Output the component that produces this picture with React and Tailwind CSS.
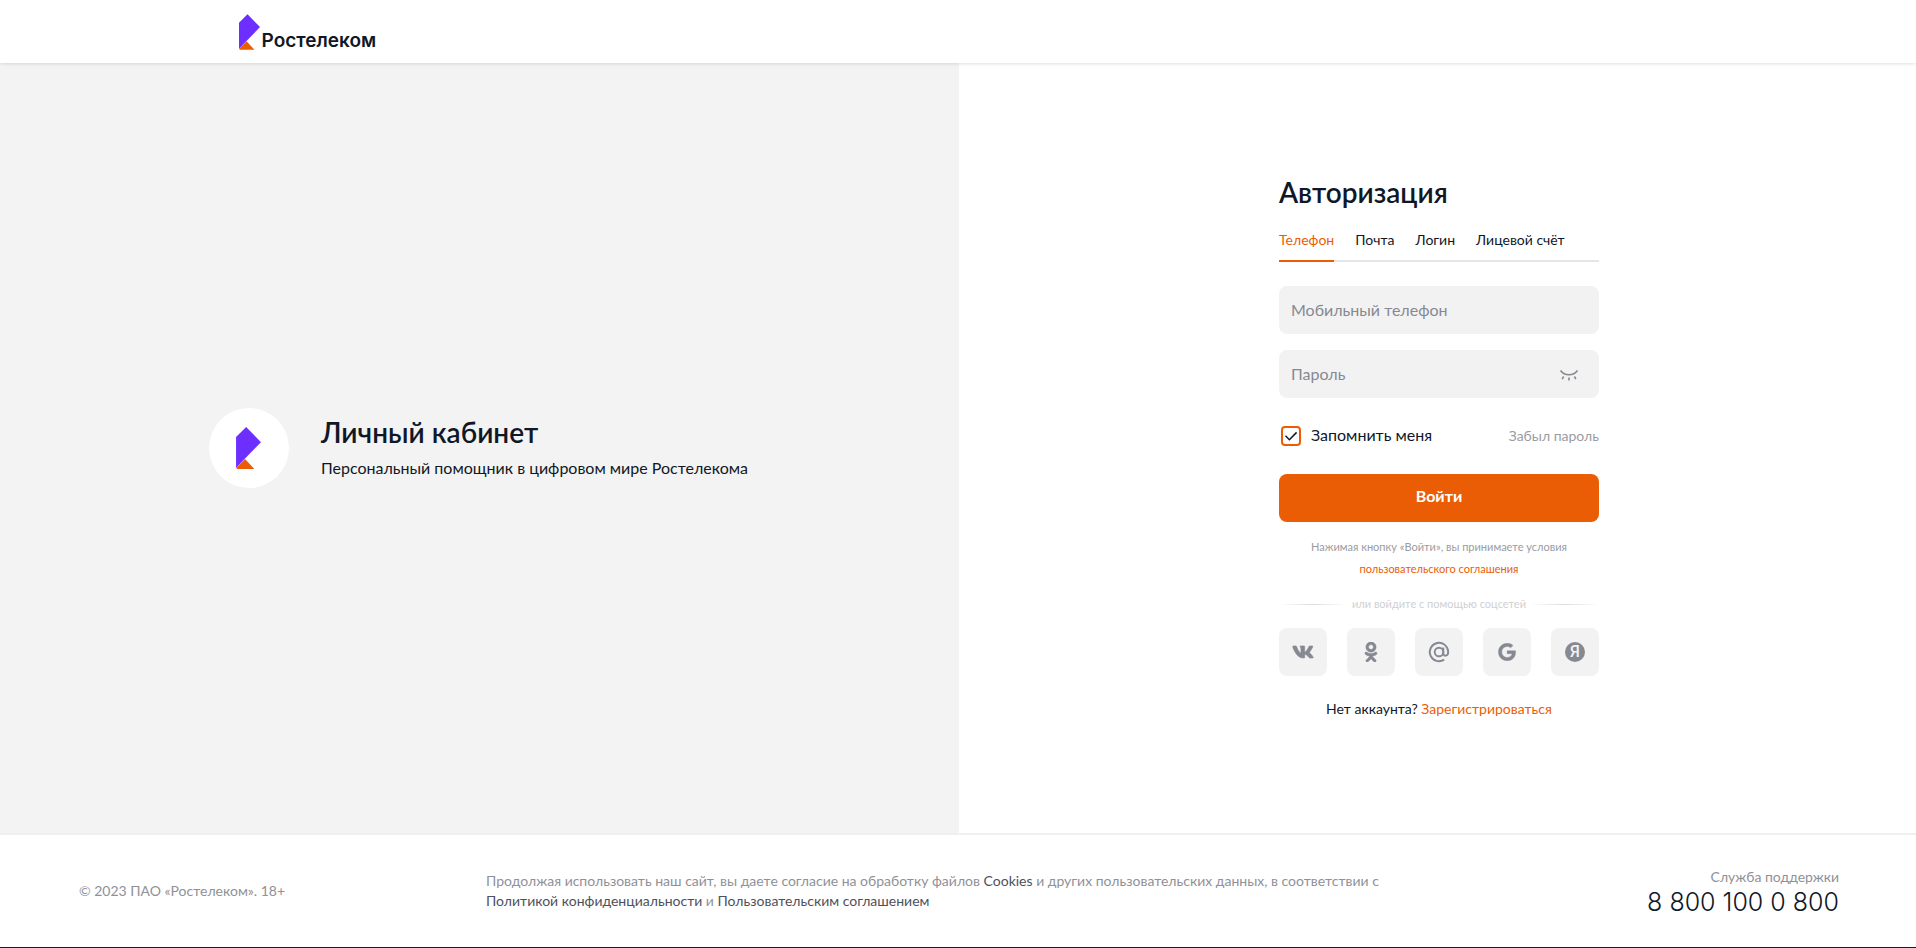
import React, { useState } from 'react';
import { FaVk, FaOdnoklassniki, FaGoogle } from 'react-icons/fa';

function Mark({ className }) {
  return (
    <svg viewBox="0 0 64 108" className={className} aria-hidden="true">
      <path d="M26 0 64 39 0 105V26Z" fill="#6c2fff" />
      <path d="M23 82 47 108H3L0 105Z" fill="#ea5d05" />
    </svg>
  );
}

function EyeClosed() {
  return (
    <svg viewBox="0 0 24 24" className="size-6" fill="none" stroke="#868992" strokeWidth="1.6" aria-hidden="true">
      <path d="M3.500 8.500c2 2.700 5 4.200 8.500 4.200s6.500-1.500 8.500-4.200" />
      <path d="M12 15.500v3M6.600 14.500l-1.400 2.600M17.400 14.500l1.400 2.600" />
    </svg>
  );
}

function AtSign() {
  return (
    <svg viewBox="0 0 24 24" className="size-6" fill="none" stroke="currentColor" strokeWidth="1.900" aria-hidden="true">
      <circle cx="12" cy="12" r="4.300" />
      <path d="M16.300 7.600V13.200c0 3.700 4.900 3.200 4.900-1.200A9.200 9.200 0 1 0 17.200 19.600" />
    </svg>
  );
}

const tabs = ['Телефон', 'Почта', 'Логин', 'Лицевой счёт'];

const socials = [
  { name: 'ВКонтакте', icon: <FaVk className="size-[22px]" stroke="currentColor" strokeWidth="14" /> },
  { name: 'Одноклассники', icon: <FaOdnoklassniki className="size-5" stroke="currentColor" strokeWidth="16" /> },
  { name: 'Mail.ru', icon: <AtSign /> },
  { name: 'Google', icon: <FaGoogle className="size-[18px]" stroke="currentColor" strokeWidth="12" /> },
  {
    name: 'Яндекс',
    icon: (
      <span className="flex size-5 items-center justify-center rounded-full bg-[#868992] font-['Roboto',sans-serif] text-base leading-5 font-medium text-[#f2f2f2]">
        Я
      </span>
    ),
  },
];

const fieldClass =
  'h-12 w-full rounded-lg bg-[#f2f2f2] px-3 pb-0.5 text-base text-[#101828] outline-none placeholder:text-[#868992]';

export default function App() {
  const [active, setActive] = useState(tabs[0]);
  const [remember, setRemember] = useState(true);
  const [visible, setVisible] = useState(false);

  return (
    <div className="flex min-h-screen flex-col bg-white font-['Lato','Noto_Sans',sans-serif] text-[#101828]">
      <header className="relative z-10 flex h-[63px] items-center bg-white pl-[12.45%] shadow-[0_0_4px_rgba(0,0,0,0.18)]">
        <a href="#" className="flex items-end gap-0.5">
          <Mark className="h-9 w-[21px]" />
          <span className="font-['Inter',sans-serif] text-[19px] leading-[18px] font-semibold">Ростелеком</span>
        </a>
      </header>

      <main className="grid flex-1 grid-cols-[959fr_957fr]">
        <section className="flex items-center justify-center gap-8 bg-[#f3f3f3] pr-0.5">
          <div className="flex size-20 shrink-0 items-center justify-center rounded-full bg-white">
            <Mark className="h-[42px] w-[25px]" />
          </div>
          <div>
            <h2 className="text-[28px] leading-10 font-semibold">Личный кабинет</h2>
            <p className="text-base leading-8">Персональный помощник в цифровом мире Ростелекома</p>
          </div>
        </section>

        <section className="flex items-center justify-center pl-[3px]">
          <form className="flex w-80 flex-col" onSubmit={(e) => e.preventDefault()}>
            <h1 className="text-[28px] leading-8 font-semibold">Авторизация</h1>

            <div role="tablist" className="mt-[22px] flex gap-[21px] border-b-2 border-[#e6e6e8]">
              {tabs.map((tab) => (
                <button
                  key={tab}
                  type="button"
                  role="tab"
                  aria-selected={active === tab}
                  onClick={() => setActive(tab)}
                  className={
                    active === tab
                      ? '-mb-0.5 border-b-2 border-[#ea5d05] pb-[10px] text-sm text-[#ea5d05]'
                      : '-mb-0.5 border-b-2 border-transparent pb-[10px] text-sm'
                  }
                >
                  {tab}
                </button>
              ))}
            </div>

            <input type="tel" aria-label="Мобильный телефон" placeholder="Мобильный телефон" className={`mt-6 ${fieldClass}`} />

            <div className="relative mt-4">
              <input
                type={visible ? 'text' : 'password'}
                aria-label="Пароль"
                placeholder="Пароль"
                className={fieldClass}
              />
              <button
                type="button"
                aria-label="Показать пароль"
                onClick={() => setVisible(!visible)}
                className="absolute top-3 right-[18px]"
              >
                <EyeClosed />
              </button>
            </div>

            <div className="flex h-[76px] items-center justify-between">
              <label className="flex items-center gap-2.5 pl-0.5 text-base">
                <span className="grid size-5">
                  <input
                    type="checkbox"
                    checked={remember}
                    onChange={(e) => setRemember(e.target.checked)}
                    className="peer col-start-1 row-start-1 size-5 appearance-none rounded border-2 border-[#ea5d05] bg-white"
                  />
                  <svg
                    viewBox="0 0 20 20"
                    className="pointer-events-none invisible col-start-1 row-start-1 size-5 peer-checked:visible"
                    fill="none"
                    stroke="#101828"
                    strokeWidth="1.500"
                    aria-hidden="true"
                  >
                    <path d="m4.500 9.800 3.900 3.900 7.200-7.300" />
                  </svg>
                </span>
                <span className="pb-0.5">Запомнить меня</span>
              </label>
              <a href="#" className="text-sm text-[#9a9ca3]">Забыл пароль</a>
            </div>

            <button type="submit" className="h-12 rounded-lg bg-[#ea5d05] pb-1 text-base font-bold text-white">
              Войти
            </button>

            <p className="mt-3.5 text-center text-[11px] leading-[22px] text-[#9a9ca3]">
              Нажимая кнопку «Войти», вы принимаете условия
              <br />
              <a href="#" className="text-[#ea5d05]">пользовательского соглашения</a>
            </p>

            <div className="mt-4 flex items-center gap-1 text-[11px] leading-4 text-[#cfd0d3]">
              <span className="h-px flex-1 bg-linear-to-r from-transparent via-[#dcdcde] to-transparent" />
              или войдите с помощью соцсетей
              <span className="h-px flex-1 bg-linear-to-r from-transparent via-[#dcdcde] to-transparent" />
            </div>

            <div className="mt-4 flex justify-between">
              {socials.map(({ name, icon }) => (
                <a
                  key={name}
                  href="#"
                  aria-label={name}
                  className="flex size-12 items-center justify-center rounded-lg bg-[#f2f2f2] text-[#868992]"
                >
                  {icon}
                </a>
              ))}
            </div>

            <p className="mt-[22px] text-center text-sm leading-[22px]">
              Нет аккаунта? <a href="#" className="text-[#ea5d05]">Зарегистрироваться</a>
            </p>
          </form>
        </section>
      </main>

      <footer className="grid grid-cols-[407fr_920fr_433fr] items-center border-t-2 border-b border-t-[#f0f0f0] border-b-[#1c1c1c] pr-[77px] pl-[79px] py-[31px] text-sm text-[#8f9198]">
        <p>© 2023 ПАО «Ростелеком». 18+</p>
        <p>
          Продолжая использовать наш сайт, вы даете согласие на обработку файлов{' '}
          <a href="#" className="text-[#4d515c]">Cookies</a> и других пользовательских данных, в соответствии с{' '}
          <a href="#" className="text-[#4d515c]">Политикой конфиденциальности</a> и{' '}
          <a href="#" className="text-[#4d515c]">Пользовательским соглашением</a>
        </p>
        <div className="text-right">
          <p className="leading-[22px]">Служба поддержки</p>
          <a href="#" className="block font-['Inter',sans-serif] text-[25px] leading-7 font-light text-[#101828]">8 800 100 0 800</a>
        </div>
      </footer>
    </div>
  );
}
